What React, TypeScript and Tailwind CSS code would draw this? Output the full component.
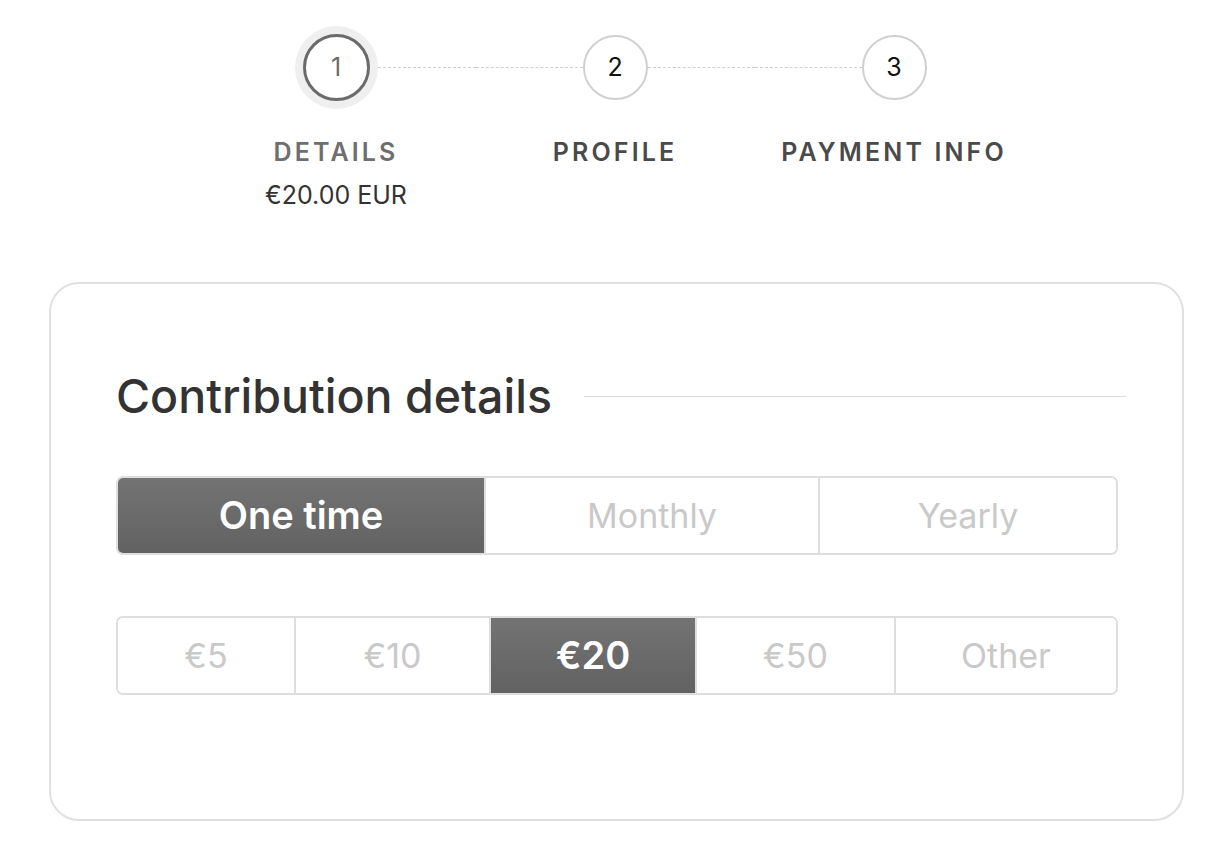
import React from 'react';

const steps = [
  { n: 1, label: 'DETAILS', sub: '€20.00 EUR', active: true },
  { n: 2, label: 'PROFILE' },
  { n: 3, label: 'PAYMENT INFO' },
];

const frequencies = [
  { label: 'One time', w: 'w-[366px]', selected: true },
  { label: 'Monthly', w: 'w-[334px]' },
  { label: 'Yearly', w: 'flex-1' },
];

const amounts = [
  { label: '€5', w: 'w-[176px]' },
  { label: '€10', w: 'w-[195px]' },
  { label: '€20', w: 'w-[206px]', selected: true },
  { label: '€50', w: 'w-[199px]' },
  { label: 'Other', w: 'flex-1' },
];

const Line = ({ show }: { show: boolean }) => (
  <div className={`flex-1 h-0 ${show ? 'border-t border-dashed border-[#cfcfcf]' : ''}`} />
);

const Stepper: React.FC = () => (
  <div className="flex justify-center pt-[26px]">
    {steps.map((s, i) => (
      <div key={s.n} className="w-[279px] flex flex-col items-center">
        <div className="w-full h-[83px] flex items-center">
          <Line show={i > 0} />
          {s.active ? (
            <div className="w-[83px] h-[83px] rounded-full bg-[#efefef] flex items-center justify-center">
              <div className="w-[67px] h-[67px] rounded-full border-[3px] border-[#6b6b6b] bg-white flex items-center justify-center text-[25px] text-[#6b6b6b]">
                {s.n}
              </div>
            </div>
          ) : (
            <div className="w-[65px] h-[65px] rounded-full border-2 border-[#d0d0d0] bg-white flex items-center justify-center text-[25px] text-[#111]">
              {s.n}
            </div>
          )}
          <Line show={i < steps.length - 1} />
        </div>
        <div
          className={`mt-[27px] text-[25px] leading-[32px] font-semibold tracking-[0.125em] ${
            s.active ? 'text-[#6e6e6e]' : 'text-[#4a4a4a]'
          }`}
        >
          {s.label}
        </div>
        {s.sub && <div className="mt-[11px] text-[25px] leading-[32px] text-[#333]">{s.sub}</div>}
      </div>
    ))}
  </div>
);

const Segmented = ({ items }: { items: { label: string; w: string; selected?: boolean }[] }) => (
  <div className="flex h-[79px] border-2 border-[#dedede] rounded-[7px] overflow-hidden">
    {items.map((it, i) => (
      <div
        key={it.label}
        className={`${it.w} flex items-center justify-center ${i > 0 ? 'border-l-2 border-[#dedede]' : ''} ${
          it.selected
            ? 'bg-gradient-to-b from-[#737373] to-[#626262] text-white text-[38px] font-semibold'
            : 'bg-white text-[#c9c9c9] text-[34px]'
        }`}
      >
        {it.label}
      </div>
    ))}
  </div>
);

const App: React.FC = () => {
  return (
    <div className="min-h-screen bg-white font-['Inter',sans-serif]">
      <Stepper />

      <div className="ml-[49px] mt-[71px] w-[1135px] border-2 border-[#e0e0e0] rounded-[30px] pl-[65px] pr-[64px] pt-[84px] pb-[124px]">
        {/* Section title */}
        <div className="flex items-center gap-[32px]">
          <h2 className="text-[46.5px] leading-[56px] font-medium text-[#333]">Contribution details</h2>
          <div className="flex-1 h-px bg-[#dcdcdc] mr-[-8px]" />
        </div>

        <div className="mt-[52px]">
          <Segmented items={frequencies} />
        </div>

        <div className="mt-[61px]">
          <Segmented items={amounts} />
        </div>
      </div>
    </div>
  );
};

export default App;
